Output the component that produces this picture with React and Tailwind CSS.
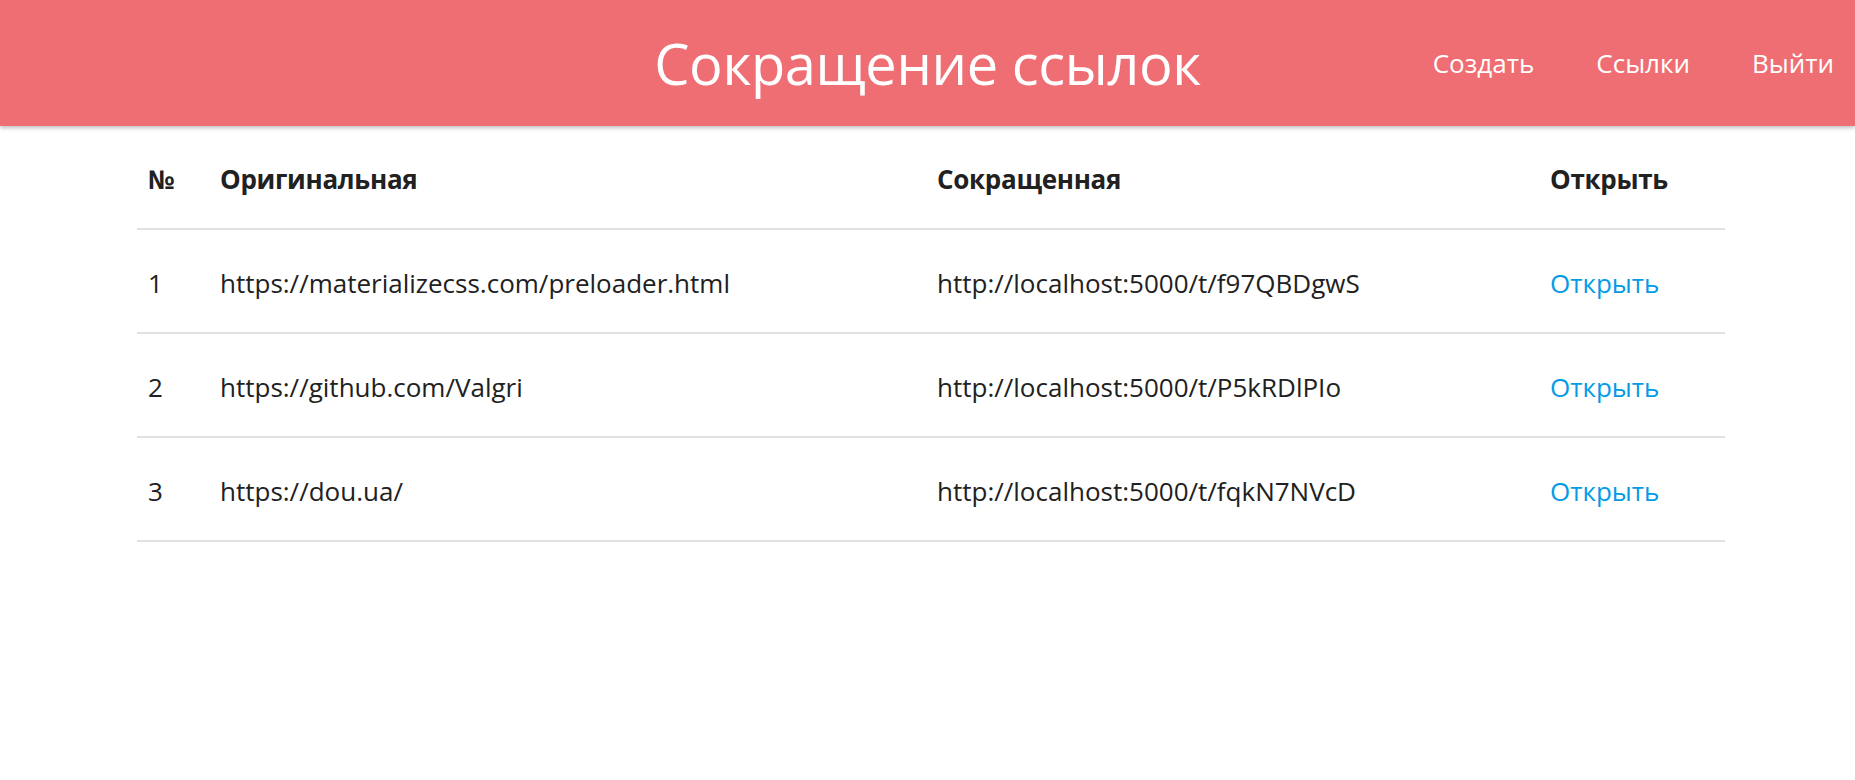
const links = [
  { id: 1, from: 'https://materializecss.com/preloader.html', to: 'http://localhost:5000/t/f97QBDgwS' },
  { id: 2, from: 'https://github.com/Valgri', to: 'http://localhost:5000/t/P5kRDlPIo' },
  { id: 3, from: 'https://dou.ua/', to: 'http://localhost:5000/t/fqkN7NVcD' },
]

export default function App() {
  return (
    <div className="min-h-screen bg-white text-[#212121]" style={{ fontFamily: '"Open Sans", "Noto Sans", sans-serif' }}>
      {/* Navbar */}
      <nav className="relative z-10 h-[126px] bg-[#ef6e73] text-white shadow-[0_2px_4px_rgba(0,0,0,0.25)] grid grid-cols-[1fr_auto_1fr] items-center">
        <div />
        <a href="#" className="text-[56px] leading-none tracking-[-0.4px]">Сокращение ссылок</a>
        <ul className="flex justify-end items-center gap-[62px] pr-[21px] text-[26px]">
          <li><a href="#">Создать</a></li>
          <li><a href="#">Ссылки</a></li>
          <li><a href="#">Выйти</a></li>
        </ul>
      </nav>

      {/* Table */}
      <div className="pl-[137px] pr-[130px]">
        <table className="w-full table-fixed border-collapse text-[26px]">
          <colgroup>
            <col className="w-[72px]" />
            <col className="w-[717px]" />
            <col className="w-[613px]" />
            <col className="w-[186px]" />
          </colgroup>
          <thead>
            <tr className="border-b-2 border-[#e0e0e0]">
              <th className="h-[103px] px-[11px] pt-[4px] text-left font-bold tracking-[-0.3px]">№</th>
              <th className="h-[103px] px-[11px] pt-[4px] text-left font-bold tracking-[-0.3px]">Оригинальная</th>
              <th className="h-[103px] px-[11px] pt-[4px] text-left font-bold tracking-[-0.3px]">Сокращенная</th>
              <th className="h-[103px] px-[11px] pt-[4px] text-left font-bold tracking-[-0.3px]">Открыть</th>
            </tr>
          </thead>
          <tbody>
            {links.map((link) => (
              <tr key={link.id} className="border-b-2 border-[#e0e0e0]">
                <td className="h-[104px] px-[11px] pt-[4px]">{link.id}</td>
                <td className="h-[104px] px-[11px] pt-[4px]">{link.from}</td>
                <td className="h-[104px] px-[11px] pt-[4px]">{link.to}</td>
                <td className="h-[104px] px-[11px] pt-[4px]">
                  <a href="#" className="text-[#039be5]">Открыть</a>
                </td>
              </tr>
            ))}
          </tbody>
        </table>
      </div>
    </div>
  )
}
